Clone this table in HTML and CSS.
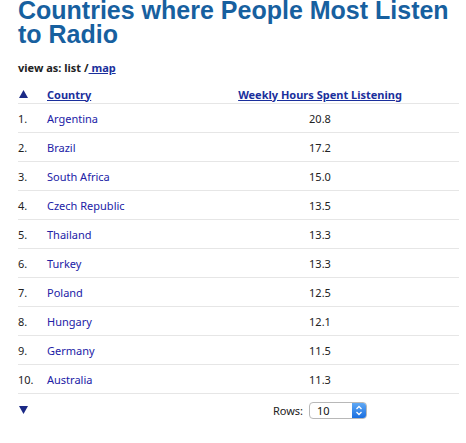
FILE: index.html
```html
<!DOCTYPE html>
<html>
<head>
<meta charset="utf-8">
<link rel="stylesheet" href="styles.css">
</head>
<body>
<div class="page">
  <h1 class="title">Countries where People Most Listen to Radio</h1>
  <p class="view-as">view as: list /<a href="#" class="view-link"> map</a></p>
  <table class="ranking">
    <thead>
      <tr>
        <th class="col-rank"><svg class="tri" width="9" height="8" viewBox="0 0 9 8"><polygon points="4.5,0 9,8 0,8" fill="#1b2a86"/></svg></th>
        <th class="col-country"><a href="#" class="head-link">Country</a></th>
        <th class="col-value"><a href="#" class="head-link">Weekly Hours Spent Listening</a></th>
      </tr>
    </thead>
    <tbody>
      <tr><td class="col-rank">1.</td><td class="col-country"><a href="#" class="country">Argentina</a></td><td class="col-value">20.8</td></tr>
      <tr><td class="col-rank">2.</td><td class="col-country"><a href="#" class="country">Brazil</a></td><td class="col-value">17.2</td></tr>
      <tr><td class="col-rank">3.</td><td class="col-country"><a href="#" class="country">South Africa</a></td><td class="col-value">15.0</td></tr>
      <tr><td class="col-rank">4.</td><td class="col-country"><a href="#" class="country">Czech Republic</a></td><td class="col-value">13.5</td></tr>
      <tr><td class="col-rank">5.</td><td class="col-country"><a href="#" class="country">Thailand</a></td><td class="col-value">13.3</td></tr>
      <tr><td class="col-rank">6.</td><td class="col-country"><a href="#" class="country">Turkey</a></td><td class="col-value">13.3</td></tr>
      <tr><td class="col-rank">7.</td><td class="col-country"><a href="#" class="country">Poland</a></td><td class="col-value">12.5</td></tr>
      <tr><td class="col-rank">8.</td><td class="col-country"><a href="#" class="country">Hungary</a></td><td class="col-value">12.1</td></tr>
      <tr><td class="col-rank">9.</td><td class="col-country"><a href="#" class="country">Germany</a></td><td class="col-value">11.5</td></tr>
      <tr><td class="col-rank">10.</td><td class="col-country"><a href="#" class="country">Australia</a></td><td class="col-value">11.3</td></tr>
    </tbody>
  </table>
  <div class="footer">
    <div class="footer-left"><svg class="tri" width="9" height="8" viewBox="0 0 9 8"><polygon points="0,0 9,0 4.5,8" fill="#1b2a86"/></svg></div>
    <div class="footer-right">
      <span class="rows-label">Rows:</span>
      <span class="select">
        <span class="select-value">10</span>
        <span class="select-stepper"><svg width="8" height="11" viewBox="0 0 8 11"><polyline points="1.5,4 4,1.5 6.5,4" fill="none" stroke="#fff" stroke-width="1.3"/><polyline points="1.5,7 4,9.5 6.5,7" fill="none" stroke="#fff" stroke-width="1.3"/></svg></span>
      </span>
    </div>
  </div>
</div>
</body>
</html>
```
FILE: styles.css
```css
html, body {
  margin: 0;
  padding: 0;
  background: #fff;
}
.page {
  width: 441px;
  padding-left: 18px;
  font-family: "Noto Sans", "DejaVu Sans", sans-serif;
  font-size: 11px;
  color: #222;
}
.title {
  width: 446px;
  margin: -2px 0 0 0;
  font-family: "Liberation Sans", Arial, sans-serif;
  font-size: 25px;
  line-height: 24px;
  font-weight: bold;
  color: #17609f;
}
.view-as {
  margin: 14px 0 0 0;
  line-height: 15px;
  font-weight: bold;
  color: #222;
}
.view-link {
  color: #1a2f9c;
  text-decoration: underline;
}
.ranking {
  margin-top: 10px;
  width: 441px;
  border-collapse: separate;
  border-spacing: 0;
  table-layout: fixed;
}
.ranking th, .ranking td {
  padding: 0;
  text-align: left;
  vertical-align: middle;
  border-bottom: 1px solid #e6e6e6;
}
.ranking th {
  height: 18px;
  font-weight: bold;
}
.ranking td {
  height: 28px;
}
.col-rank { width: 29px; }
.col-country { width: 134px; }
.ranking .col-value { text-align: center; }
.head-link {
  color: #1a2f9c;
  text-decoration: underline;
}
.country {
  color: #2121a6;
  text-decoration: none;
}
.tri { display: block; margin-left: 1px; }
.footer {
  display: grid;
  grid-template-columns: 163px 1fr;
  align-items: center;
  padding-top: 7px;
  height: 18px;
}
.footer-right {
  display: flex;
  justify-content: center;
  align-items: center;
  gap: 6px;
}
.rows-label { color: #222; }
.select {
  display: inline-flex;
  width: 58px;
  height: 17px;
  box-sizing: border-box;
  border: 1px solid #b8b8b8;
  border-radius: 4px;
  overflow: hidden;
  background: #fff;
}
.select-value {
  flex: 1;
  padding-left: 7px;
  line-height: 15px;
  font-size: 11px;
  color: #111;
}
.select-stepper {
  width: 14px;
  display: flex;
  align-items: center;
  justify-content: center;
  background: linear-gradient(#5fa8f5, #1a6fe0);
}
.select-stepper svg { display: block; }
```
